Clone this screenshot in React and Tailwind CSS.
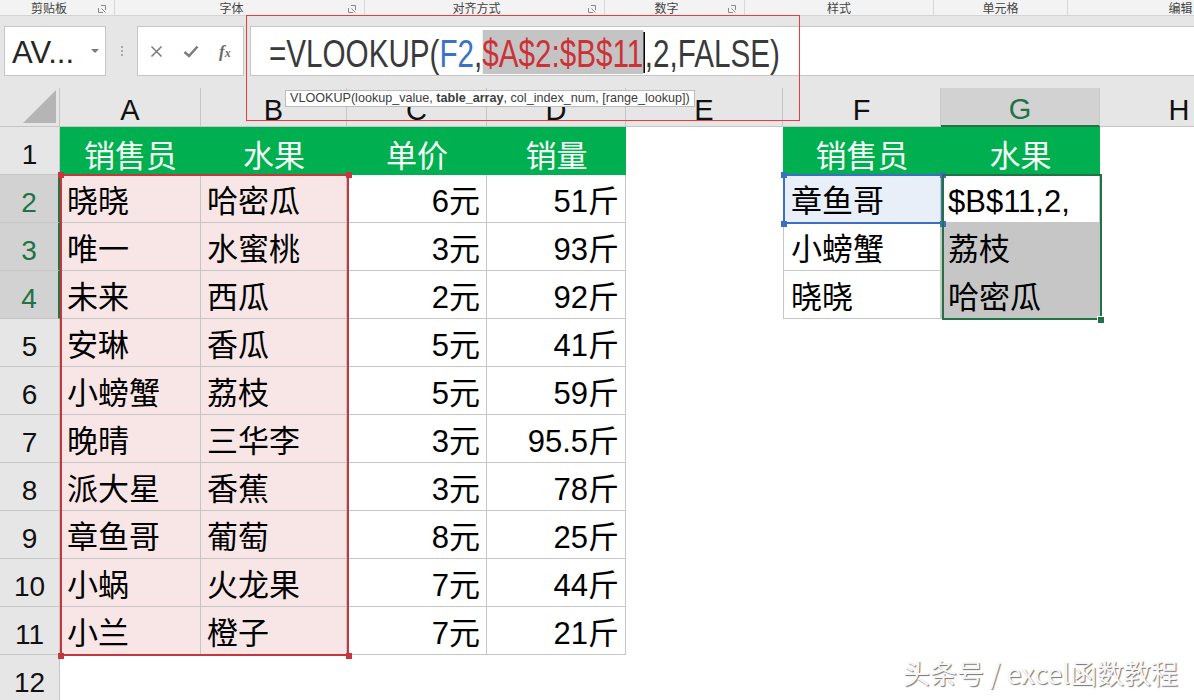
import React from 'react';

const rows = [
  ['晓晓', '哈密瓜', '6元', '51斤'],
  ['唯一', '水蜜桃', '3元', '93斤'],
  ['未来', '西瓜', '2元', '92斤'],
  ['安琳', '香瓜', '5元', '41斤'],
  ['小螃蟹', '荔枝', '5元', '59斤'],
  ['晚晴', '三华李', '3元', '95.5斤'],
  ['派大星', '香蕉', '3元', '78斤'],
  ['章鱼哥', '葡萄', '8元', '25斤'],
  ['小蜗', '火龙果', '7元', '44斤'],
  ['小兰', '橙子', '7元', '21斤'],
];

const lookup = [
  ['章鱼哥', '$B$11,2,'],
  ['小螃蟹', '荔枝'],
  ['晓晓', '哈密瓜'],
];

const groups = [
  { label: '剪贴板', w: 'w-[115px]', launcher: true },
  { label: '字体', w: 'w-[250px]', launcher: true },
  { label: '对齐方式', w: 'w-[240px]', launcher: true },
  { label: '数字', w: 'w-[140px]', launcher: true },
  { label: '样式', w: 'w-[189px]', launcher: false },
  { label: '单元格', w: 'w-[134px]', launcher: false },
  { label: '编辑', w: 'w-[226px]', launcher: false },
];

const cols = ['A', 'B', 'C', 'D', 'E', 'F', 'G', 'H'];

function Launcher() {
  return (
    <svg width="8" height="8" viewBox="0 0 8 8" className="shrink-0">
      <path d="M0.5 3 V7.5 H5" fill="none" stroke="#8a8a8a" strokeWidth="1" />
      <path d="M3 0.5 H7.5 V5 M7.5 7.5 L3.5 3.5" fill="none" stroke="#8a8a8a" strokeWidth="1" />
    </svg>
  );
}

function RowHead({ n, active }) {
  return (
    <div
      className={
        'flex items-center justify-center pt-[8px] text-[28px] border-b border-[#c6c6c6] ' +
        (active
          ? 'bg-[#d2d2d2] text-[#217346] border-r-2 border-r-[#217346]'
          : 'bg-[#e6e6e6] text-[#111] border-r border-r-[#c6c6c6]')
      }
    >
      {n}
    </div>
  );
}

function Handle({ className }) {
  return <div className={'absolute w-[6px] h-[6px] ' + className} />;
}

const cell = 'flex items-center pt-[7px] border-r border-b border-[#c6c6c6]';
const head = 'flex items-center justify-center pt-[6px] bg-[#00b050] text-[#f6fff6] font-[\'Noto_Sans_CJK_SC\',sans-serif]';

export default function App() {
  return (
    <div className="relative w-[1194px] h-[700px] overflow-hidden bg-white font-['Liberation_Sans','Noto_Sans_CJK_SC',sans-serif]">
      {/* ribbon group labels */}
      <div className="flex h-[16px] bg-[#f3f3f3] border-b border-[#d4d4d4] text-[12px] leading-none text-[#444] font-['Noto_Sans_CJK_SC',sans-serif]">
        {groups.map((g) => (
          <div key={g.label} className={'flex items-center shrink-0 border-r border-[#d8d8d8] ' + g.w}>
            <div className="flex-1 text-center">{g.label}</div>
            {g.launcher && (
              <div className="w-[16px] flex justify-start pt-[3px]">
                <Launcher />
              </div>
            )}
          </div>
        ))}
      </div>

      {/* formula bar */}
      <div className="flex items-start h-[72px] bg-[#e6e6e6] pt-[10px] pl-[4px]">
        <div className="w-[102px] h-[50px] bg-white border border-[#c6c6c6] flex items-center pl-[7px] pr-[6px]">
          <span className="flex-1 text-[31px] text-[#262626] leading-none pt-[3px]">AV...</span>
          <span className="w-0 h-0 border-l-[4px] border-r-[4px] border-t-[4px] border-l-transparent border-r-transparent border-t-[#7a7a7a]" />
        </div>
        <div className="w-[31px] h-[50px] flex flex-col items-center justify-center gap-[2px]">
          <span className="w-[2px] h-[2px] bg-[#a8a8a8]" />
          <span className="w-[2px] h-[2px] bg-[#a8a8a8]" />
          <span className="w-[2px] h-[2px] bg-[#a8a8a8]" />
        </div>
        <div className="w-[107px] h-[50px] bg-white border border-[#c6c6c6] flex items-center pl-[12px] gap-[20px]">
          <svg width="13" height="13" viewBox="0 0 13 13">
            <path d="M1.5 1.5 L11.5 11.5 M11.5 1.5 L1.5 11.5" stroke="#7d7d7d" strokeWidth="1.6" />
          </svg>
          <svg width="16" height="13" viewBox="0 0 16 13">
            <path d="M1.5 7 L6 11 L14.5 1.5" fill="none" stroke="#7d7d7d" strokeWidth="2.6" />
          </svg>
          <span className="font-['Liberation_Serif',serif] italic font-bold text-[#6a6a6a] text-[17px] leading-none">
            f<span className="text-[12px]">x</span>
          </span>
        </div>
        <div className="flex-1 ml-[6px] h-[50px] bg-white border border-r-0 border-[#c6c6c6] flex items-center pl-[18px] pt-[2px] overflow-hidden">
          <div className="inline-flex items-center origin-left scale-x-[0.78] text-[38px] leading-none whitespace-nowrap text-[#3a3a3a]">
            <span className="pt-[4px]">=VLOOKUP(</span>
            <span className="pt-[4px] text-[#3a72c8]">F2</span>
            <span className="pt-[4px]">,</span>
            <span className="h-[44px] flex items-center pt-[4px] bg-[#c4c4c4] text-[#cc3138]">$A$2:$B$11</span>
            <span className="w-[2px] h-[41px] bg-black" />
            <span className="pt-[4px]">,2,FALSE)</span>
          </div>
        </div>
      </div>

      {/* sheet */}
      <div className="relative grid grid-cols-[60px_141px_146px_140px_139px_157px_158px_159px_159px] grid-rows-[39px_repeat(12,48px)] text-[31px] text-black">
        {/* column headers */}
        <div className="relative bg-[#e6e6e6] border-r border-b border-[#c6c6c6]">
          <svg width="33" height="33" viewBox="0 0 33 33" className="absolute right-[3px] bottom-[3px]">
            <path d="M0 33 L33 33 L33 0 Z" fill="#b5b5b5" />
          </svg>
        </div>
        {cols.map((c) =>
          c === 'G' ? (
            <div key={c} className="flex items-center justify-center pt-[7px] text-[29px] bg-[#d2d2d2] text-[#217346] border-r border-[#c6c6c6] border-b-2 border-b-[#217346]">
              {c}
            </div>
          ) : (
            <div key={c} className="flex items-center justify-center pt-[7px] text-[29px] bg-[#e6e6e6] text-[#111] border-r border-b border-[#c6c6c6]">
              {c}
            </div>
          )
        )}

        {/* row 1 */}
        <RowHead n={1} />
        {['销售员', '水果', '单价', '销量'].map((t) => (
          <div key={t} className={head}>
            {t}
          </div>
        ))}
        <div />
        <div className={head}>销售员</div>
        <div className={head}>水果</div>
        <div />

        {/* rows 2 - 11 */}
        {rows.map((r, i) => (
          <React.Fragment key={i}>
            <RowHead n={i + 2} active={i < 3} />
            <div className={cell + ' pl-[7px] bg-[#f8e6e6]'}>{r[0]}</div>
            <div className={cell + ' pl-[6px] bg-[#f8e6e6]'}>{r[1]}</div>
            <div className={cell + ' justify-end pr-[6px]'}>{r[2]}</div>
            <div className={cell + ' justify-end pr-[6px]'}>{r[3]}</div>
            <div />
            {i < 3 ? (
              <>
                <div className={cell + ' pl-[7px] border-l ' + (i === 0 ? 'bg-[#e9eff9]' : '')}>{lookup[i][0]}</div>
                <div className={cell + ' pl-[7px] ' + (i === 0 ? 'bg-white' : 'bg-[#c6c6c6]')}>{lookup[i][1]}</div>
              </>
            ) : (
              <>
                <div />
                <div />
              </>
            )}
            <div />
          </React.Fragment>
        ))}

        {/* row 12 */}
        <RowHead n={12} />

        {/* reference range A2:B11 */}
        <div className="absolute left-[60px] top-[86px] w-[289px] h-[482px] border-2 border-[#c4373f]" />
        <Handle className="left-[58px] top-[84px] bg-[#c4373f]" />
        <Handle className="left-[346px] top-[84px] bg-[#c4373f]" />
        <Handle className="left-[58px] top-[565px] bg-[#c4373f]" />
        <Handle className="left-[346px] top-[565px] bg-[#c4373f]" />

        {/* reference F2 */}
        <div className="absolute left-[783px] top-[86px] w-[160px] h-[50px] border-2 border-[#3a6fc4]" />
        <Handle className="left-[781px] top-[84px] bg-[#3a6fc4]" />
        <Handle className="left-[940px] top-[84px] bg-[#3a6fc4]" />
        <Handle className="left-[781px] top-[133px] bg-[#3a6fc4]" />
        <Handle className="left-[940px] top-[133px] bg-[#3a6fc4]" />

        {/* selection G2:G4 */}
        <div className="absolute left-[942px] top-[86px] w-[160px] h-[146px] border-2 border-[#217346]" />
        <div className="absolute left-[1097px] top-[228px] w-[8px] h-[8px] bg-[#217346] border border-white" />
      </div>

      {/* annotation box */}
      <div className="absolute left-[246px] top-[15px] w-[554px] h-[106px] border-[1.5px] border-[#ee3b3b]" />

      {/* function tooltip */}
      <div className="absolute left-[285px] top-[90px] h-[17px] px-[4px] flex items-center bg-white border border-[#bcbcbc] text-[12.6px] leading-none text-[#3c3c3c] whitespace-nowrap">
        VLOOKUP(lookup_value,&nbsp;<b>table_array</b>, col_index_num, [range_lookup])
      </div>

      {/* watermark */}
      <div className="absolute right-[16px] bottom-[7px] text-[27px] text-[#f7f7f7] [text-shadow:1px_1px_1px_rgba(0,0,0,0.55)] font-['Noto_Sans_CJK_SC',sans-serif]">
        头条号 / excel函数教程
      </div>
    </div>
  );
}
